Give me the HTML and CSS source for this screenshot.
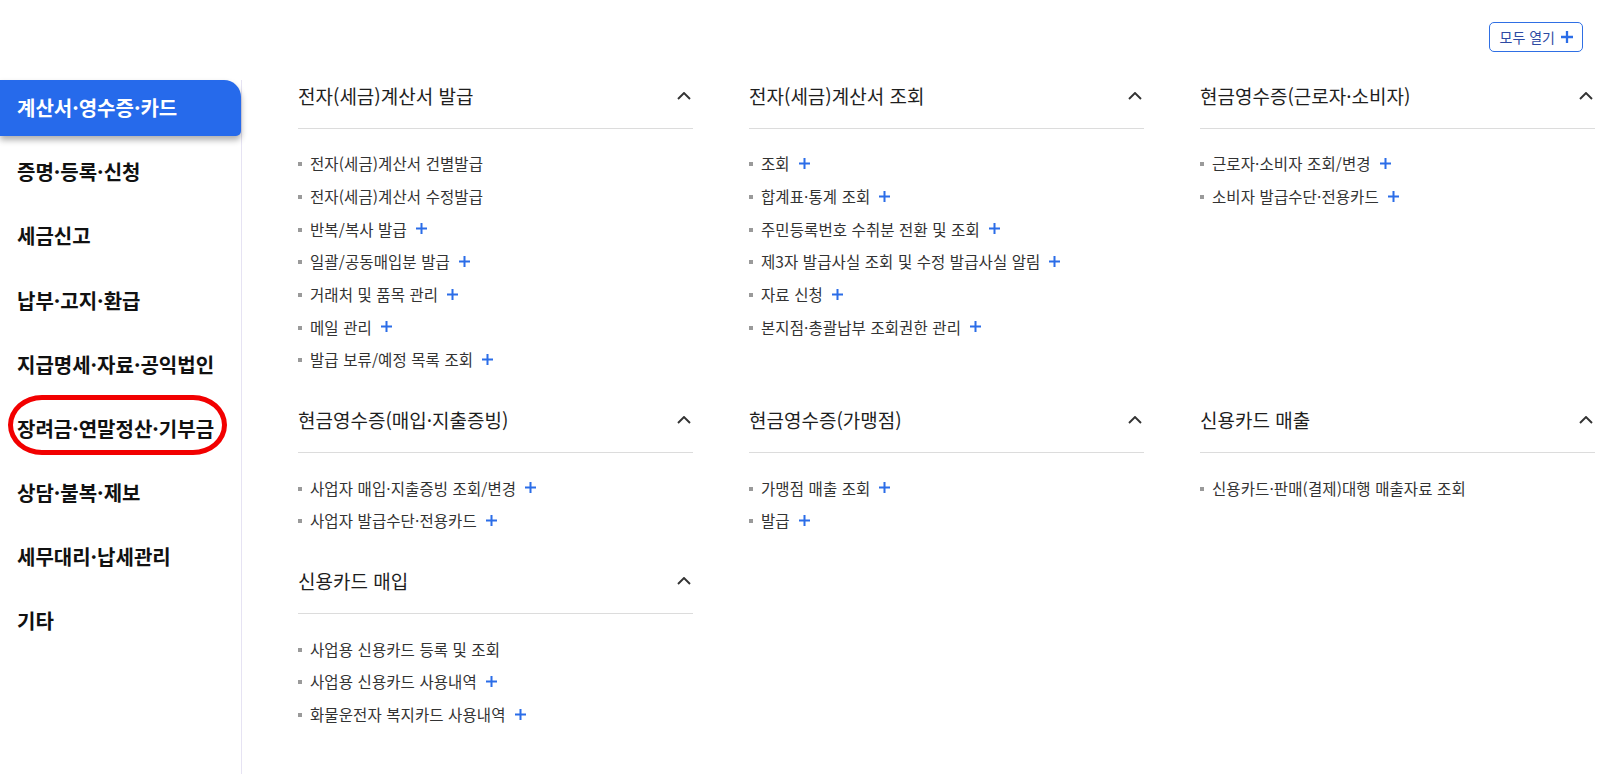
FILE: index.html
```html
<!DOCTYPE html>
<html lang="ko">
<head>
<meta charset="utf-8">
<title>메뉴</title>
<link rel="stylesheet" href="styles.css">
</head>
<body>
<div class="topbar">
  <button class="open-all">모두 열기 <svg class="plus plus-btn" viewBox="0 0 11 11"><path d="M5.5 0v11M0 5.5h11"/></svg></button>
</div>
<div class="main">
  <nav class="sidebar">
    <ul class="side-list">
      <li class="side-item active">계산서·영수증·카드</li>
      <li class="side-item">증명·등록·신청</li>
      <li class="side-item">세금신고</li>
      <li class="side-item">납부·고지·환급</li>
      <li class="side-item">지급명세·자료·공익법인</li>
      <li class="side-item circled">장려금·연말정산·기부금</li>
      <li class="side-item">상담·불복·제보</li>
      <li class="side-item">세무대리·납세관리</li>
      <li class="side-item">기타</li>
    </ul>
  </nav>
  <section class="content">
    <div class="group">
      <div class="group-head"><h3>전자(세금)계산서 발급</h3><svg class="chev" viewBox="0 0 14 8"><path d="M1 7l6-6 6 6"/></svg></div>
      <ul class="items">
        <li>전자(세금)계산서 건별발급</li>
        <li>전자(세금)계산서 수정발급</li>
        <li>반복/복사 발급<svg class="plus" viewBox="0 0 11 11"><path d="M5.5 0v11M0 5.5h11"/></svg></li>
        <li>일괄/공동매입분 발급<svg class="plus" viewBox="0 0 11 11"><path d="M5.5 0v11M0 5.5h11"/></svg></li>
        <li>거래처 및 품목 관리<svg class="plus" viewBox="0 0 11 11"><path d="M5.5 0v11M0 5.5h11"/></svg></li>
        <li>메일 관리<svg class="plus" viewBox="0 0 11 11"><path d="M5.5 0v11M0 5.5h11"/></svg></li>
        <li>발급 보류/예정 목록 조회<svg class="plus" viewBox="0 0 11 11"><path d="M5.5 0v11M0 5.5h11"/></svg></li>
      </ul>
    </div>
    <div class="group">
      <div class="group-head"><h3>전자(세금)계산서 조회</h3><svg class="chev" viewBox="0 0 14 8"><path d="M1 7l6-6 6 6"/></svg></div>
      <ul class="items">
        <li>조회<svg class="plus" viewBox="0 0 11 11"><path d="M5.5 0v11M0 5.5h11"/></svg></li>
        <li>합계표·통계 조회<svg class="plus" viewBox="0 0 11 11"><path d="M5.5 0v11M0 5.5h11"/></svg></li>
        <li>주민등록번호 수취분 전환 및 조회<svg class="plus" viewBox="0 0 11 11"><path d="M5.5 0v11M0 5.5h11"/></svg></li>
        <li>제3자 발급사실 조회 및 수정 발급사실 알림<svg class="plus" viewBox="0 0 11 11"><path d="M5.5 0v11M0 5.5h11"/></svg></li>
        <li>자료 신청<svg class="plus" viewBox="0 0 11 11"><path d="M5.5 0v11M0 5.5h11"/></svg></li>
        <li>본지점·총괄납부 조회권한 관리<svg class="plus" viewBox="0 0 11 11"><path d="M5.5 0v11M0 5.5h11"/></svg></li>
      </ul>
    </div>
    <div class="group">
      <div class="group-head"><h3>현금영수증(근로자·소비자)</h3><svg class="chev" viewBox="0 0 14 8"><path d="M1 7l6-6 6 6"/></svg></div>
      <ul class="items">
        <li>근로자·소비자 조회/변경<svg class="plus" viewBox="0 0 11 11"><path d="M5.5 0v11M0 5.5h11"/></svg></li>
        <li>소비자 발급수단·전용카드<svg class="plus" viewBox="0 0 11 11"><path d="M5.5 0v11M0 5.5h11"/></svg></li>
      </ul>
    </div>
    <div class="group">
      <div class="group-head"><h3>현금영수증(매입·지출증빙)</h3><svg class="chev" viewBox="0 0 14 8"><path d="M1 7l6-6 6 6"/></svg></div>
      <ul class="items">
        <li>사업자 매입·지출증빙 조회/변경<svg class="plus" viewBox="0 0 11 11"><path d="M5.5 0v11M0 5.5h11"/></svg></li>
        <li>사업자 발급수단·전용카드<svg class="plus" viewBox="0 0 11 11"><path d="M5.5 0v11M0 5.5h11"/></svg></li>
      </ul>
    </div>
    <div class="group">
      <div class="group-head"><h3>현금영수증(가맹점)</h3><svg class="chev" viewBox="0 0 14 8"><path d="M1 7l6-6 6 6"/></svg></div>
      <ul class="items">
        <li>가맹점 매출 조회<svg class="plus" viewBox="0 0 11 11"><path d="M5.5 0v11M0 5.5h11"/></svg></li>
        <li>발급<svg class="plus" viewBox="0 0 11 11"><path d="M5.5 0v11M0 5.5h11"/></svg></li>
      </ul>
    </div>
    <div class="group">
      <div class="group-head"><h3>신용카드 매출</h3><svg class="chev" viewBox="0 0 14 8"><path d="M1 7l6-6 6 6"/></svg></div>
      <ul class="items">
        <li>신용카드·판매(결제)대행 매출자료 조회</li>
      </ul>
    </div>
    <div class="group">
      <div class="group-head"><h3>신용카드 매입</h3><svg class="chev" viewBox="0 0 14 8"><path d="M1 7l6-6 6 6"/></svg></div>
      <ul class="items">
        <li>사업용 신용카드 등록 및 조회</li>
        <li>사업용 신용카드 사용내역<svg class="plus" viewBox="0 0 11 11"><path d="M5.5 0v11M0 5.5h11"/></svg></li>
        <li>화물운전자 복지카드 사용내역<svg class="plus" viewBox="0 0 11 11"><path d="M5.5 0v11M0 5.5h11"/></svg></li>
      </ul>
    </div>
  </section>
</div>
</body>
</html>
```
FILE: styles.css
```css
*, *::before, *::after { box-sizing: border-box; }
html, body { margin: 0; padding: 0; background: #fff; }
body {
  font-family: "Noto Sans CJK KR", "Noto Sans", sans-serif;
  color: #222;
  overflow: hidden;
  height: 774px;
}
ul { list-style: none; margin: 0; padding: 0; }

.topbar {
  height: 80px;
  display: flex;
  justify-content: flex-end;
  align-items: flex-start;
  padding: 22px 21px 0 0;
}
.open-all {
  height: 30px;
  padding: 0 9px 0 10px;
  border: 1px solid #2f6fe4;
  border-radius: 5px;
  background: #fff;
  color: #2d4aa3;
  font-family: inherit;
  font-size: 14px;
  letter-spacing: 0;
  display: flex;
  align-items: center;
  gap: 6px;
  cursor: pointer;
}
.plus {
  width: 11px;
  height: 11px;
  fill: none;
  stroke: #2b6de8;
  stroke-width: 2;
  margin-left: 9px;
  flex: none;
}
.open-all .plus-btn { margin-left: 0; width: 12px; height: 12px; stroke-width: 2.1; }

.main {
  display: flex;
  height: 694px;
}
.sidebar {
  width: 242px;
  flex: none;
  border-right: 1px solid #e6e3f3;
}
.side-list {
  display: flex;
  flex-direction: column;
  gap: 8.5px;
}
.side-item {
  position: relative;
  height: 55.6px;
  display: flex;
  align-items: center;
  padding-left: 17px;
  font-size: 20px;
  font-weight: 700;
  letter-spacing: 0;
  color: #111;
}
.side-item.active {
  width: 241px;
  background: #266aeb;
  color: #fff;
  border-radius: 0 17px 5px 0;
  box-shadow: 0 4px 6px rgba(0, 0, 0, 0.32);
}
.side-item.circled::after {
  content: "";
  position: absolute;
  left: 8px;
  top: -5px;
  width: 219px;
  height: 60px;
  border: 5px solid #f20000;
  border-radius: 34px / 30px;
}

.content {
  flex: 1;
  padding-left: 56px;
  display: grid;
  grid-template-columns: repeat(3, 395px);
  column-gap: 56px;
  row-gap: 28.6px;
  align-content: start;
  align-items: start;
}
.group-head {
  display: flex;
  justify-content: space-between;
  align-items: center;
  padding-bottom: 16px;
  border-bottom: 1px solid #dcdcdc;
}
.group-head h3 {
  margin: 0;
  font-size: 19px;
  font-weight: 400;
  line-height: 32px;
  letter-spacing: 0;
  color: #1e1e1e;
}
.chev {
  width: 14px;
  height: 8px;
  margin-right: 2px;
  fill: none;
  stroke: #333;
  stroke-width: 1.9;
}
.items {
  padding-top: 18px;
}
.items li {
  position: relative;
  display: flex;
  align-items: center;
  height: 32.7px;
  padding-left: 12px;
  font-size: 15.5px;
  letter-spacing: 0.1px;
  color: #333;
}
.items li::before {
  content: "";
  position: absolute;
  left: 0;
  top: 50%;
  width: 4px;
  height: 4px;
  margin-top: -1px;
  background: #9a9a9a;
}
```
